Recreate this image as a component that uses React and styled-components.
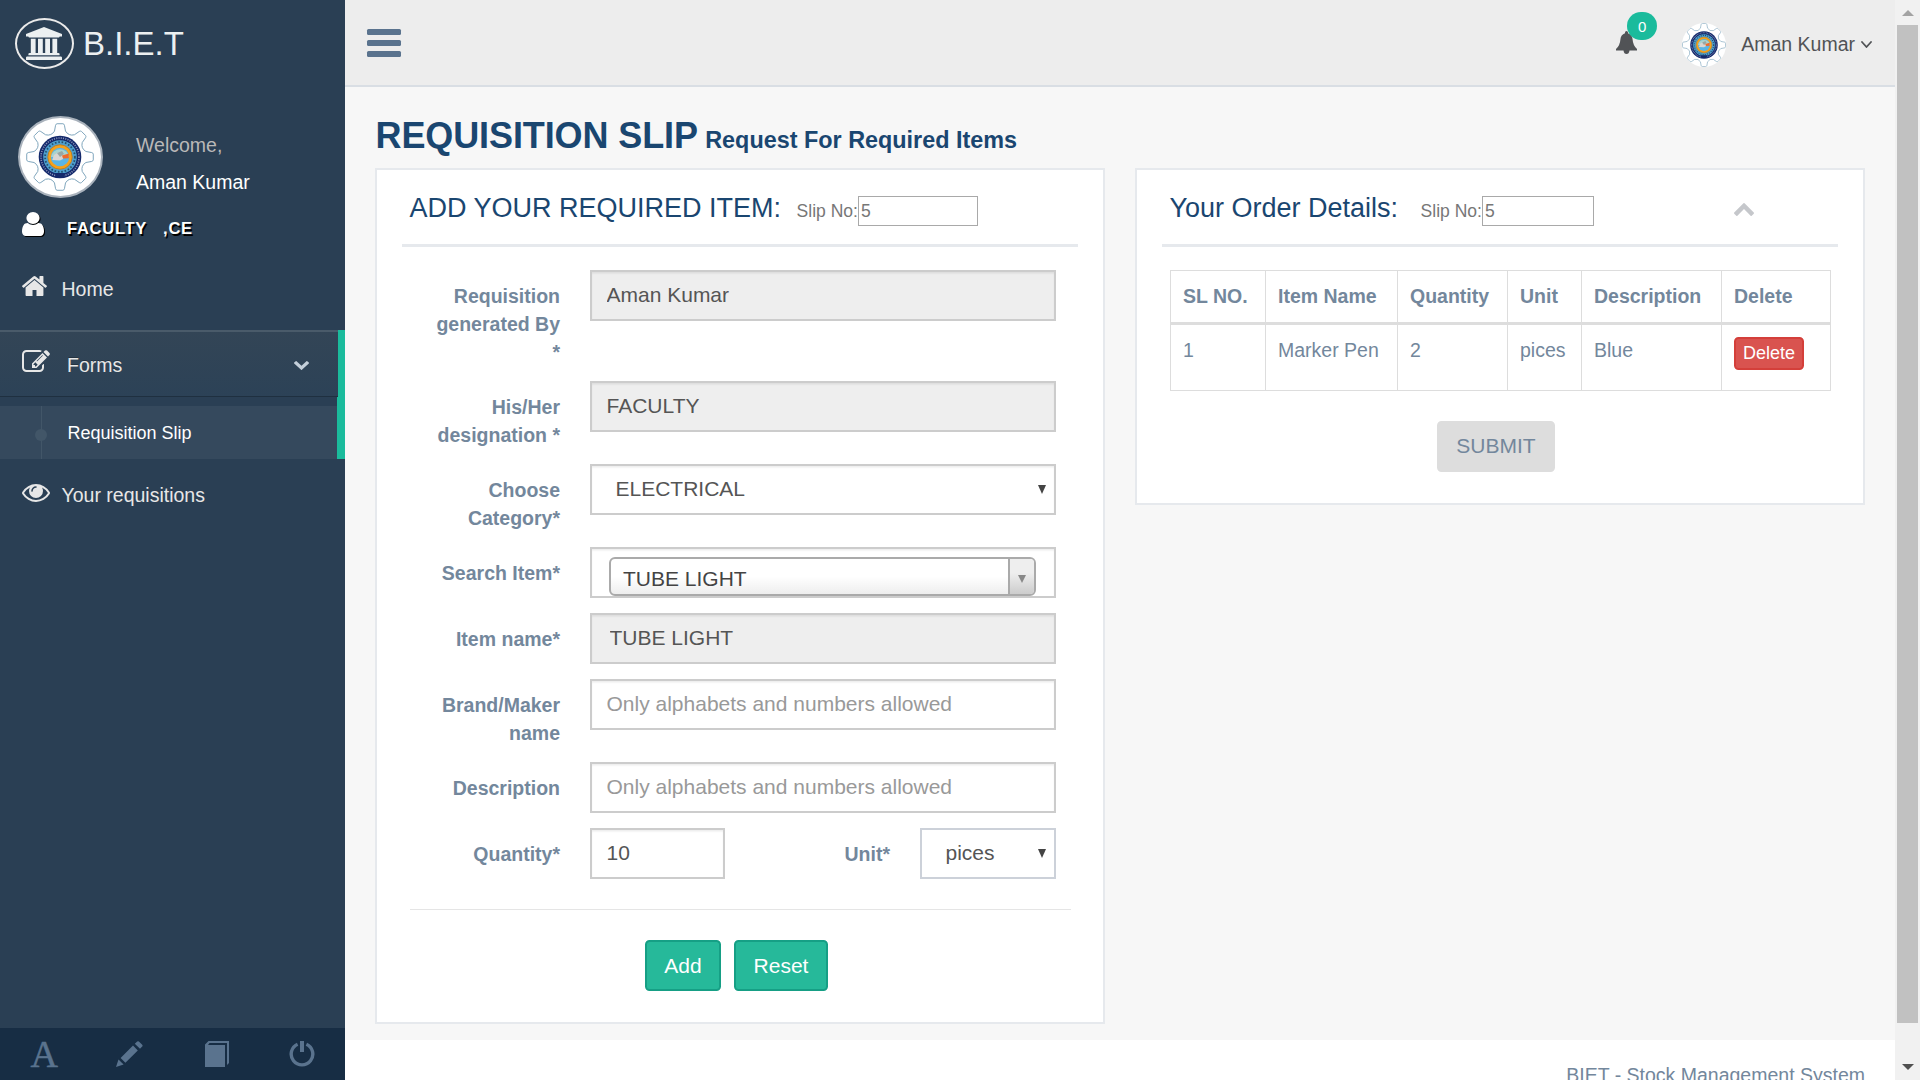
import React from "react";
import styled, { createGlobalStyle, css } from "styled-components";

const GlobalStyle = createGlobalStyle`
  *, *::before, *::after { box-sizing: border-box; }
  html, body { margin: 0; padding: 0; overflow: hidden; background: #2a3f54; }
  body, input, button, table {
    font-family: "Liberation Sans", Arial, Helvetica, sans-serif;
    font-size: 19.5px;
    line-height: 28px;
    color: #73879c;
  }
`;

/* ---------- icons ---------- */

const Svg = styled.svg`
  display: block;
  flex: none;
  fill: currentColor;
`;

const Icon = ({ box, w, h, d }) => (
  <Svg width={w} height={h} viewBox={box} preserveAspectRatio="none">
    <path d={d} />
  </Svg>
);

const PATHS = {
  university:
    "M960 0l960 384v128h-128q0 26-20.5 45t-48.5 19h-1526q-28 0-48.5-19t-20.5-45h-128v-128zm-704 640h256v768h128v-768h256v768h128v-768h256v768h128v-768h256v768h59q28 0 48.5 19t20.5 45v64h-1664v-64q0-26 20.5-45t48.5-19h59v-768zm1595 960q28 0 48.5 19t20.5 45v128h-1920v-128q0-26 20.5-45t48.5-19h1782z",
  user: "M1536 1399q0 109-62.5 187t-150.5 78h-854q-88 0-150.5-78t-62.5-187q0-85 8.5-160.5t31.5-152 58.5-131 94-89 134.5-34.5q131 128 313 128t313-128q76 0 134.5 34.5t94 89 58.5 131 31.5 152 8.5 160.5zm-256-887q0 159-112.5 271.5t-271.5 112.5-271.5-112.5-112.5-271.5 112.5-271.5 271.5-112.5 271.5 112.5 112.5 271.5z",
  home: "M1472 992v480q0 26-19 45t-45 19h-384v-384h-256v384h-384q-26 0-45-19t-19-45v-480q0-1 .5-3t.5-3l575-474 575 474q1 2 1 6zm223-69l-62 74q-8 9-21 11h-3q-13 0-21-7l-692-577-692 577q-12 8-24 7-13-2-21-11l-62-74q-8-10-7-23.5t11-21.5l719-599q32-26 76-26t76 26l244 204v-195q0-14 9-23t23-9h192q14 0 23 9t9 23v408l219 182q10 8 11 21.5t-7 23.5z",
  edit: "M888 1184l116-116-152-152-116 116v56h96v96h56zm440-720q-16-16-33 1l-350 350q-17 17-1 33t33-1l350-350q17-17 1-33zm80 594v190q0 119-84.5 203.5t-203.5 84.5h-832q-119 0-203.5-84.5t-84.5-203.5v-832q0-119 84.5-203.5t203.5-84.5h832q63 0 117 25 15 7 18 23 3 17-9 29l-49 49q-14 14-32 8-23-6-45-6h-832q-66 0-113 47t-47 113v832q0 66 47 113t113 47h832q66 0 113-47t47-113v-126q0-13 9-22l64-64q15-15 35-7t20 29zm-96-738l288 288-672 672h-288v-288zm444 132l-92 92-288-288 92-92q28-28 68-28t68 28l152 152q28 28 28 68t-28 68z",
  eye: "M1664 960q-152-236-381-353 61 104 61 225 0 185-131.5 316.5t-316.5 131.5-316.5-131.5-131.5-316.5q0-121 61-225-229 117-381 353 133 205 333.5 326.5t434.5 121.5 434.5-121.5 333.5-326.5zm-720-384q0-20-14-34t-34-14q-125 0-214.5 89.5t-89.5 214.5q0 20 14 34t34 14 34-14 14-34q0-86 61-147t147-61q20 0 34-14t14-34zm848 384q0 34-20 69-140 230-376.5 368.5t-499.5 138.5-499.5-139-376.5-368q-20-35-20-69t20-69q140-229 376.5-368t499.5-139 499.5 139 376.5 368q20 35 20 69z",
  down: "M1683 808l-742 741q-19 19-45 19t-45-19l-742-741q-19-19-19-45.5t19-45.5l166-165q19-19 45-19t45 19l531 531 531-531q19-19 45-19t45 19l166 165q19 19 19 45.5t-19 45.5z",
  up: "M1683 1331l-166 165q-19 19-45 19t-45-19l-531-531-531 531q-19 19-45 19t-45-19l-166-165q-19-19-19-45.5t19-45.5l742-741q19-19 45-19t45 19l742 741q19 19 19 45.5t-19 45.5z",
  angle:
    "M1395 736q0 13-10 23l-466 466q-10 10-23 10t-23-10l-466-466q-10-10-10-23t10-23l50-50q10-10 23-10t23 10l393 393 393-393q10-10 23-10t23 10l50 50q10 10 10 23z",
};

/* Eight-tooth gear outline, centred on the origin */
const gearPath = (() => {
  const out = [];
  const at = (deg, r) => {
    const a = ((deg - 90) * Math.PI) / 180;
    return `${(Math.cos(a) * r).toFixed(2)} ${(Math.sin(a) * r).toFixed(2)}`;
  };
  for (let i = 0; i < 8; i++) {
    const c = i * 45;
    out.push(
      `${i ? "L" : "M"}${at(c - 12, 26.5)} L${at(c - 8, 32)} Q${at(c - 7, 33.4)} ${at(c - 5, 33.4)}`,
      `L${at(c + 5, 33.4)} Q${at(c + 7, 33.4)} ${at(c + 8, 32)} L${at(c + 12, 26.5)}`,
      `Q${at(c + 22.5, 22.5)} ${at(c + 33, 26.5)}`
    );
  }
  return out.join(" ") + "Z";
})();

const Crest = ({ size, reach }) => (
  <Svg width={size} height={size} viewBox={`${-reach} ${-reach} ${reach * 2} ${reach * 2}`}>
    <path d={gearPath} fill="#fff" stroke="#7fa6bd" strokeWidth="1" />
    <circle r="21.3" fill="#14296b" />
    <circle r="19" fill="none" stroke="#8a93b8" strokeWidth="1.6" strokeDasharray="1.1 1.2" />
    <circle r="16.8" fill="#4f9fce" />
    <circle r="14.9" fill="none" stroke="#23516f" strokeWidth="1.8" strokeDasharray="1.6 1.8" />
    <path d="M-5 16 L5 16 L4 20 L-4 20Z" fill="#14296b" />
    <circle r="12.2" fill="#f5a11c" stroke="#b87a1e" strokeWidth="0.8" />
    <circle r="9.2" fill="#5ab5e6" />
    <path d="M-9.1 0 A9.2 9.2 0 0 1 9.1 0Z" fill="#a9d3cf" />
    <path d="M-7.8 3 L-6-2 L-2-4.5 L1-5 L4-2 L3 2 L0 3.6Z" fill="#d9d5d2" />
    <path d="M-3-4 L2-6 L4-3 L0 0Z" fill="#98a7a4" />
    <path d="M2-1.6 L8.8-3.4 L8.8 1.2 L3 1.6Z" fill="#ee6a2b" />
  </Svg>
);

/* ---------- shell ---------- */

const Shell = styled.div`
  display: flex;
  width: 1920px;
  height: 1080px;
  overflow: hidden;
`;

const Sidebar = styled.aside`
  display: flex;
  flex-direction: column;
  flex: none;
  width: 345px;
  background: #2a3f54;
`;

const Brand = styled.div`
  display: flex;
  align-items: center;
  gap: 9px;
  height: 87px;
  padding-left: 15px;
  color: #ecf0f1;
  font-size: 33px;
  line-height: 40px;
`;

const BrandMark = styled.span`
  display: flex;
  justify-content: center;
  width: 59px;
  height: 51px;
  padding: 7px 2px 0 0;
  border: 2px solid #eaeaea;
  border-radius: 50%;
`;

const Profile = styled.div`
  display: flex;
  padding: 29px 0 0 18px;
  height: 119px;
`;

const ProfilePic = styled.div`
  display: flex;
  align-items: center;
  justify-content: center;
  width: 85px;
  height: 82px;
  padding-right: 2px;
  background: #fff;
  border: 2px solid #a9b2bc;
  border-radius: 50%;
`;

const ProfileInfo = styled.div`
  padding: 15px 0 0 33px;
`;

const Welcome = styled.div`
  color: #bab8b8;
`;

const ProfileName = styled.div`
  margin-top: 9px;
  color: #fff;
`;

const Role = styled.div`
  display: flex;
  height: 50px;
  padding: 6px 0 0 22px;
  color: #fff;
  font-size: 16.5px;
  line-height: 30px;
  font-weight: bold;
  letter-spacing: 0.75px;
  text-shadow: 1.5px 1.5px #000;
  svg {
    overflow: visible;
    filter: drop-shadow(1.5px 1.5px 0 #000);
  }
  span + span { margin-left: 16px; }
`;

const RoleText = styled.div`
  margin: 1px 0 0 23px;
`;

const NavLink = styled.a`
  display: flex;
  height: ${(p) => p.$h}px;
  padding: ${(p) => p.$top}px 0 0 22px;
  color: #e7e7e7;
`;

const NavLabel = styled.span`
  margin: ${(p) => p.$drop || 0}px 0 0 ${(p) => p.$gap}px;
`;

const FormsLink = styled(NavLink)`
  width: 345px;
  border-right: 7px solid #1abb9c;
  background: linear-gradient(#334556, #2c4257);
  box-shadow: inset 0 2px 0 #4a5b6a, inset 0 -1px 0 #1f3040;
  text-shadow: rgba(0, 0, 0, 0.25) 0 -1px 0;
`;

const NavChevron = styled.span`
  margin: 11px 29px 0 auto;
  color: #c4cfda;
`;

const SubMenu = styled.div`
  height: 62px;
  padding-top: 9px;
  border-right: 8px solid #1abb9c;
`;

const SubLink = styled.a`
  display: flex;
  align-items: center;
  height: 53px;
  background: #35495d;
  color: #fff;
  font-size: 18px;
`;

const TreeMark = styled.span`
  display: flex;
  align-items: center;
  justify-content: center;
  width: 12px;
  height: 53px;
  margin: 0 20.5px 0 35px;
  background: linear-gradient(#425668, #425668) 6px 0 / 1px 100% no-repeat;
  &::after {
    content: "";
    width: 12px;
    height: 12px;
    margin-top: 5px;
    border-radius: 50%;
    background: #425668;
  }
`;

const SidebarFooter = styled.div`
  display: flex;
  height: 52px;
  margin-top: auto;
  background: #172d44;
  color: #5a738e;
`;

const FooterTool = styled.a`
  display: flex;
  justify-content: center;
  width: 86.25px;
  padding: 13px 0 0 ${(p) => p.$nudge || 0}px;
`;

const FontGlyph = styled.span`
  margin-top: -4px;
  padding-left: 2px;
  font: 38px/35px "Liberation Serif", "Times New Roman", serif;
  -webkit-text-stroke: 0.5px currentColor;
`;

/* ---------- top bar ---------- */

const Main = styled.div`
  display: flex;
  flex-direction: column;
  flex: 1;
  min-width: 0;
  background: #f7f7f7;
`;

const TopBar = styled.header`
  display: flex;
  align-items: flex-start;
  height: 87px;
  padding: 0 23px 0 22px;
  border-bottom: 2px solid #d9dee4;
  background: #ededed;
  color: #515356;
`;

const Burger = styled.div`
  display: grid;
  gap: 5px;
  width: 34px;
  margin-top: 29px;
  span {
    height: 6px;
    border-radius: 1.5px;
    background: #5a738e;
  }
`;

const BellSlot = styled.div`
  position: relative;
  margin: 31px 0 0 auto;
`;

const Badge = styled.span`
  position: absolute;
  left: 11px;
  top: -19px;
  width: 30px;
  height: 28px;
  border-radius: 15px;
  background: #1abb9c;
  color: #fff;
  font-size: 15px;
  line-height: 29px;
  text-align: center;
`;

const TopAvatar = styled.div`
  display: flex;
  margin: 23px 15px 0 45px;
  width: 44px;
  height: 44px;
  overflow: hidden;
  border-radius: 50%;
  background: #fff;
`;

const TopName = styled.span`
  margin: 30px 6px 0 0;
`;

const TopCaret = styled.span`
  margin-top: 41px;
`;

/* ---------- content ---------- */

const Content = styled.main`
  height: 953px;
  padding: 0 30px;
`;

const PageTitle = styled.h1`
  height: 81px;
  margin: 0;
  padding: 29px 0 0 0.5px;
  color: #1a4670;
  font-size: 36px;
  line-height: 40px;
  font-weight: bold;
  white-space: nowrap;
  letter-spacing: -0.1px;
  small {
    margin-left: -2px;
    font-size: 23.4px;
    letter-spacing: 0;
  }
`;

const Columns = styled.div`
  display: flex;
  align-items: flex-start;
  gap: 30px;
`;

const Panel = styled.section`
  width: 730px;
  height: ${(p) => p.$h}px;
  padding: 0 25px;
  border: 2px solid #e6e9ed;
  background: #fff;
`;

const PanelHead = styled.div`
  display: flex;
  align-items: flex-start;
  height: 77px;
  padding: 17px 0 0 7.5px;
  border-bottom: 3px solid #e6e9ed;
`;

const PanelTitle = styled.h2`
  margin: 6px 0 0;
  color: #1a4670;
  font-size: 27px;
  line-height: 30px;
  font-weight: normal;
  white-space: nowrap;
`;

const SlipLabel = styled.label`
  display: flex;
  margin-left: ${(p) => p.$gap}px;
  color: #777;
  font-size: 17.55px;
  line-height: 30px;
  white-space: nowrap;
  span { margin-top: 9px; }
`;

const SlipInput = styled.input`
  width: ${(p) => p.$w}px;
  height: 30px;
  margin: 9px 0 0;
  padding: 0 2px;
  border: 1px solid #a9a9a9;
  border-radius: 0;
  background: #fff;
  color: #777;
  font-size: 17.55px;
  outline: 0;
`;

const CollapseMark = styled.span`
  margin: 16px 84px 0 auto;
  color: #c5c7cb;
`;

const Form = styled.form`
  padding: 23px 20px 0 27px;
`;

const Row = styled.div`
  display: grid;
  grid-template-columns: 131px 466px;
  column-gap: 30px;
  height: ${(p) => p.$h}px;
`;

const Label = styled.label`
  padding-top: 12px;
  font-weight: bold;
  text-align: right;
`;

const boxed = css`
  width: 100%;
  height: 51px;
  margin: 0;
  border: 2px solid #ccc;
  border-radius: 0;
  box-shadow: inset 0 1.5px 1.5px rgba(0, 0, 0, 0.075);
  background: ${(p) => (p.readOnly ? "#eee" : "#fff")};
  color: #555;
  font-size: 21px;
  outline: 0;
`;

const Field = styled.input`
  ${boxed}
  padding: 0 0 1px ${(p) => p.$pad || 14.5}px;
  &::placeholder { color: #999; opacity: 1; }
`;

const Select = styled.div`
  ${boxed}
  display: flex;
  justify-content: space-between;
  padding: 8px 8.5px 0 23.5px;
  line-height: 30px;
  ${(p) => p.$plain && "border-color: #ccd1d9; box-shadow: none;"}
`;

const Triangle = styled.span`
  width: 0;
  height: 0;
  margin-top: ${(p) => p.$top}px;
  border: solid transparent;
  border-width: ${(p) => p.$size}px 4.5px 0;
  border-top-color: ${(p) => p.$color};
`;

const ChosenWrap = styled.div`
  ${boxed}
  padding: 8px 18px 0 17px;
`;

const Chosen = styled.div`
  display: flex;
  justify-content: space-between;
  height: 39px;
  padding-left: 12px;
  border: 2px solid #aaa;
  border-radius: 6px;
  background: linear-gradient(#fff 50%, #eee);
  color: #444;
  line-height: 30px;
  overflow: hidden;
`;

const ChosenText = styled.span`
  padding-top: 5px;
`;

const ChosenArrow = styled.div`
  display: flex;
  justify-content: center;
  width: 26px;
  border-left: 2px solid #aaa;
  background: linear-gradient(#eee 40%, #ccc);
`;

const SplitRow = styled.div`
  display: grid;
  grid-template-columns: 135px 1fr 136px;
  column-gap: 30px;
`;

const Rule = styled.hr`
  height: 1px;
  margin: 15px -13px 30px -19px;
  border: 0;
  background: #e5e5e5;
`;

const Actions = styled.div`
  display: flex;
  gap: 13px;
  padding-left: 216px;
`;

const Button = styled.button`
  width: ${(p) => p.$w}px;
  height: 51px;
  padding: ${(p) => (p.$drop ? "1px 0 0" : "0 0 1px")};
  border: 2px solid #169f85;
  border-radius: 4.5px;
  background: #26b99a;
  color: #fff;
  font-size: 21px;
`;

const SubmitButton = styled(Button)`
  display: block;
  margin: 30px 0 0 275px;
  border-color: #ddd;
  background: #ddd;
  color: #73879c;
`;

const Table = styled.table`
  width: 660px;
  margin: 23px 0 0 8px;
  table-layout: fixed;
  border-collapse: collapse;
  th, td {
    padding: 11px 0 0 12px;
    border: 1px solid #ddd;
    text-align: left;
    vertical-align: top;
    white-space: nowrap;
  }
  th { height: 53px; border-bottom: 3px solid #ddd; }
  td { height: 67px; }
`;

const DeleteButton = styled.button`
  display: block;
  width: 70px;
  height: 33px;
  margin-top: 1px;
  padding: 0 0 1px;
  border: 2px solid #d43f3a;
  border-radius: 4.5px;
  background: #d9534f;
  color: #fff;
  font-size: 18px;
  line-height: 27px;
`;

const PageFooter = styled.footer`
  height: 40px;
  padding: 21px 30px 0 0;
  background: #fff;
  text-align: right;
  white-space: nowrap;
  overflow: hidden;
`;

/* ---------- scroll bar ---------- */

const ScrollBar = styled.div`
  display: flex;
  flex-direction: column;
  align-items: center;
  width: 25px;
  padding: 10px 0;
  background: #f1f1f1;
`;

const Thumb = styled.div`
  width: 21px;
  height: 998px;
  margin: 9px 2px auto;
  background: #c1c1c1;
`;

const ScrollArrow = styled.span`
  width: 0;
  height: 0;
  border: 0 solid transparent;
  border-width: ${(p) => (p.$up ? "0 6px 6px" : "6px 6px 0")};
  border-bottom-color: #a3a3a3;
  border-top-color: #505050;
`;

const SlipNo = ({ gap, w }) => (
  <SlipLabel $gap={gap}>
    <span>Slip No:</span>
    <SlipInput $w={w} defaultValue="5" />
  </SlipLabel>
);

export default function App() {
  return (
    <Shell>
      <GlobalStyle />
      <Sidebar>
        <Brand>
          <BrandMark>
            <Icon box="0 0 1920 1792" w={36} h={33} d={PATHS.university} />
          </BrandMark>
          B.I.E.T
        </Brand>
        <Profile>
          <ProfilePic>
            <Crest size={68} reach={34} />
          </ProfilePic>
          <ProfileInfo>
            <Welcome>Welcome,</Welcome>
            <ProfileName>Aman Kumar</ProfileName>
          </ProfileInfo>
        </Profile>
        <Role>
          <Icon box="256 128 1280 1536" w={22} h={24} d={PATHS.user} />
          <RoleText>
            <span>FACULTY</span>
            <span>,CE</span>
          </RoleText>
        </Role>
        <NavLink $h={74} $top={20}>
          <Icon box="89 253 1614 1283" w={25} h={20} d={PATHS.home} />
          <NavLabel $gap={14.5} $drop={-1}>Home</NavLabel>
        </NavLink>
        <FormsLink $h={67} $top={20}>
          <Icon box="0 128 1792 1408" w={28} h={22} d={PATHS.edit} />
          <NavLabel $gap={17} $drop={1}>Forms</NavLabel>
          <NavChevron>
            <Icon box="90 533 1612 1035" w={15} h={9} d={PATHS.down} />
          </NavChevron>
        </FormsLink>
        <SubMenu>
          <SubLink>
            <TreeMark />
            Requisition Slip
          </SubLink>
        </SubMenu>
        <NavLink $h={60} $top={25}>
          <Icon box="0 384 1792 1152" w={28} h={18} d={PATHS.eye} />
          <NavLabel $gap={11.5} $drop={-3}>Your requisitions</NavLabel>
        </NavLink>
        <SidebarFooter>
          <FooterTool>
            <FontGlyph>A</FontGlyph>
          </FooterTool>
          <FooterTool $nudge={1}>
            <Svg width="27" height="26" viewBox="0 0 27 26">
              <path d="M0 26L2.5 18.6L7.6 23.6Z M4.6 17L17 4.6L21.8 9.4L9.4 21.8Z M18.8 2.8L21.2 .6Q22 -.2 22.9 .6L26.2 3.8Q27 4.6 26.2 5.5L24 7.8Z" />
            </Svg>
          </FooterTool>
          <FooterTool $nudge={2}>
            <Svg width="24" height="26" viewBox="0 0 24 26">
              <path d="M0 3.5L3.5 0H24V22L22 24V2H4.5L3 4H20V26H0Z" />
            </Svg>
          </FooterTool>
          <FooterTool $nudge={1}>
            <Svg width="26" height="26" viewBox="0 0 26 26">
              <path d="M11 0H15V11H11Z" />
              <path d="M8.6 3.2A10.8 10.8 0 1 0 17.4 3.2" fill="none" stroke="currentColor" strokeWidth="3.4" />
            </Svg>
          </FooterTool>
        </SidebarFooter>
      </Sidebar>

      <Main>
        <TopBar>
          <Burger>
            <span />
            <span />
            <span />
          </Burger>
          <BellSlot>
            <Svg width="21" height="23" viewBox="0 0 21 23">
              <path d="M9 1.5Q9 0 10.5 0T12 1.5V2.2Q16.2 3.6 16.6 8.5Q17 14.5 21 18V19.5H0V18Q4 14.5 4.4 8.5Q4.8 3.6 9 2.2Z M7.5 19.5H13.5Q13 23 10.5 23T7.5 19.5Z" />
            </Svg>
            <Badge>0</Badge>
          </BellSlot>
          <TopAvatar>
            <Crest size={44} reach={34} />
          </TopAvatar>
          <TopName>Aman Kumar</TopName>
          <TopCaret>
            <Icon box="397 653 998 582" w={11} h={7} d={PATHS.angle} />
          </TopCaret>
        </TopBar>

        <Content>
          <PageTitle>
            REQUISITION SLIP <small>Request For Required Items</small>
          </PageTitle>
          <Columns>
            <Panel $h={856}>
              <PanelHead>
                <PanelTitle>ADD YOUR REQUIRED ITEM:</PanelTitle>
                <SlipNo gap={15.5} w={120} />
              </PanelHead>
              <Form>
                <Row $h={111}>
                  <Label>Requisition generated By *</Label>
                  <Field readOnly value="Aman Kumar" />
                </Row>
                <Row $h={83}>
                  <Label>His/Her designation *</Label>
                  <Field readOnly value="FACULTY" />
                </Row>
                <Row $h={83}>
                  <Label>Choose Category*</Label>
                  <Select>
                    ELECTRICAL
                    <Triangle $size={9} $top={11} $color="#444" />
                  </Select>
                </Row>
                <Row $h={66}>
                  <Label>Search Item*</Label>
                  <ChosenWrap>
                    <Chosen>
                      <ChosenText>TUBE LIGHT</ChosenText>
                      <ChosenArrow>
                        <Triangle $size={8} $top={16} $color="#888" />
                      </ChosenArrow>
                    </Chosen>
                  </ChosenWrap>
                </Row>
                <Row $h={66}>
                  <Label>Item name*</Label>
                  <Field readOnly value="TUBE LIGHT" $pad={17.5} />
                </Row>
                <Row $h={83}>
                  <Label>Brand/Maker name</Label>
                  <Field placeholder="Only alphabets and numbers allowed" />
                </Row>
                <Row $h={66}>
                  <Label>Description</Label>
                  <Field placeholder="Only alphabets and numbers allowed" />
                </Row>
                <Row $h={66}>
                  <Label>Quantity*</Label>
                  <SplitRow>
                    <Field defaultValue="10" />
                    <Label>Unit*</Label>
                    <Select $plain>
                      pices
                      <Triangle $size={9} $top={11} $color="#444" />
                    </Select>
                  </SplitRow>
                </Row>
                <Rule />
                <Actions>
                  <Button type="button" $w={76} $drop>Add</Button>
                  <Button type="button" $w={94} $drop>Reset</Button>
                </Actions>
              </Form>
            </Panel>

            <Panel $h={337}>
              <PanelHead>
                <PanelTitle>Your Order Details:</PanelTitle>
                <SlipNo gap={22.5} w={112} />
                <CollapseMark>
                  <Icon box="90 480 1612 1035" w={20} h={13} d={PATHS.up} />
                </CollapseMark>
              </PanelHead>
              <Table>
                <colgroup>
                  <col width="95" />
                  <col width="132" />
                  <col width="110" />
                  <col width="74" />
                  <col width="140" />
                  <col width="109" />
                </colgroup>
                <thead>
                  <tr>
                    <th>SL NO.</th>
                    <th>Item Name</th>
                    <th>Quantity</th>
                    <th>Unit</th>
                    <th>Description</th>
                    <th>Delete</th>
                  </tr>
                </thead>
                <tbody>
                  <tr>
                    <td>1</td>
                    <td>Marker Pen</td>
                    <td>2</td>
                    <td>pices</td>
                    <td>Blue</td>
                    <td>
                      <DeleteButton>Delete</DeleteButton>
                    </td>
                  </tr>
                </tbody>
              </Table>
              <SubmitButton $w={118}>SUBMIT</SubmitButton>
            </Panel>
          </Columns>
        </Content>
        <PageFooter>BIET - Stock Management System</PageFooter>
      </Main>

      <ScrollBar>
        <ScrollArrow $up />
        <Thumb />
        <ScrollArrow />
      </ScrollBar>
    </Shell>
  );
}
